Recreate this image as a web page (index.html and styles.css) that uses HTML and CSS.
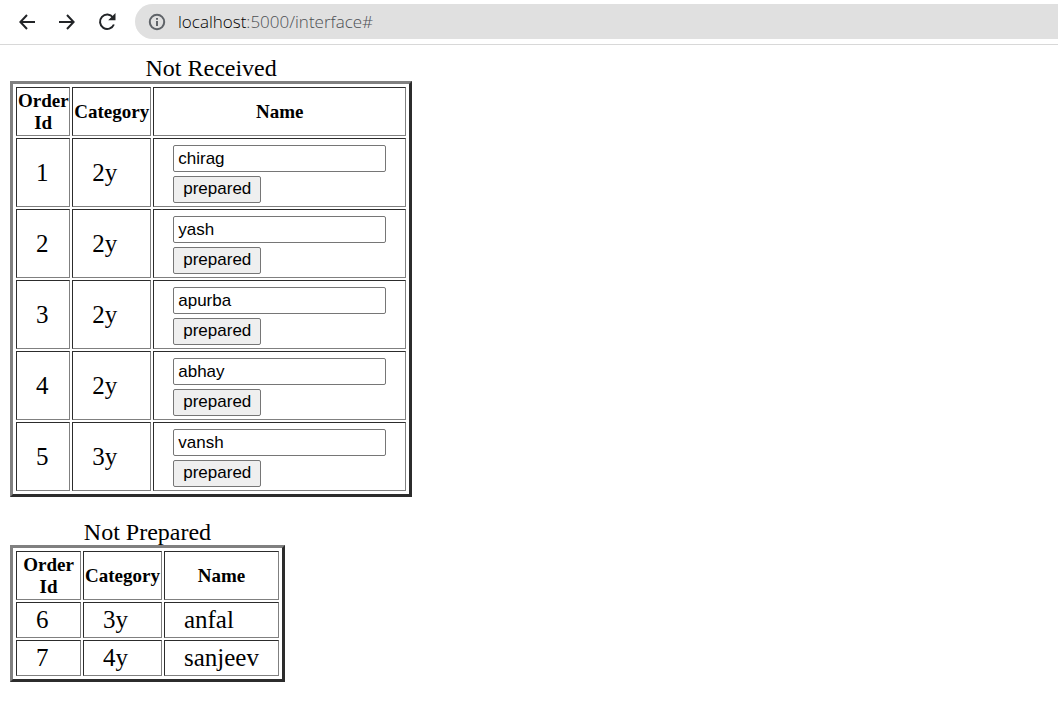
FILE: index.html
```html
<!DOCTYPE html>
<html lang="en">
<head>
<meta charset="utf-8">
<title>Orders</title>
<link rel="stylesheet" href="styles.css">
</head>
<body>
<header class="toolbar">
  <nav class="nav">
    <button class="nav-button" type="button" aria-label="Back"><svg width="16" height="16" viewBox="0 0 16 16"><path d="M16 8H2M8 1L1.400 8L8 15"/></svg></button>
    <button class="nav-button" type="button" aria-label="Forward"><svg width="16" height="16" viewBox="0 0 16 16"><path d="M0 8H14M8 1L14.600 8L8 15"/></svg></button>
    <button class="nav-button" type="button" aria-label="Reload"><svg width="18" height="18" viewBox="0 0 18 18"><path d="M15 4.500A7.200 7.200 0 1 0 15.900 11.500"/><path class="solid" d="M17.500 0V7.300H10.200Z"/></svg></button>
  </nav>
  <div class="address">
    <svg class="info" width="18" height="18" viewBox="0 0 18 18"><circle cx="9" cy="9" r="7.200"/><path d="M9 8V13M9 5V6.800"/></svg>
    <div class="url" role="textbox" aria-label="Address"><span class="host">localhost</span>:5000/interface#</div>
  </div>
</header>
<main class="page">
  <table class="orders">
    <caption>Not Received</caption>
    <thead><tr><th class="id">Order Id</th><th>Category</th><th>Name</th></tr></thead>
    <tbody>
      <tr><td>1</td><td>2y</td><td><form class="entry"><input type="text" aria-label="Name for order 1" value="chirag"><button type="button">prepared</button></form></td></tr>
      <tr><td>2</td><td>2y</td><td><form class="entry"><input type="text" aria-label="Name for order 2" value="yash"><button type="button">prepared</button></form></td></tr>
      <tr><td>3</td><td>2y</td><td><form class="entry"><input type="text" aria-label="Name for order 3" value="apurba"><button type="button">prepared</button></form></td></tr>
      <tr><td>4</td><td>2y</td><td><form class="entry"><input type="text" aria-label="Name for order 4" value="abhay"><button type="button">prepared</button></form></td></tr>
      <tr><td>5</td><td>3y</td><td><form class="entry"><input type="text" aria-label="Name for order 5" value="vansh"><button type="button">prepared</button></form></td></tr>
    </tbody>
  </table>
  <table class="orders">
    <caption>Not Prepared</caption>
    <thead><tr><th class="id wide">Order Id</th><th>Category</th><th>Name</th></tr></thead>
    <tbody>
      <tr><td>6</td><td>3y</td><td>anfal</td></tr>
      <tr><td>7</td><td>4y</td><td>sanjeev</td></tr>
    </tbody>
  </table>
</main>
</body>
</html>
```
FILE: styles.css
```css
* { box-sizing: border-box; }
body { margin: 0; background: #fff; color: #000; font-family: "Liberation Serif", serif; }

.toolbar { display: flex; align-items: center; gap: 16px; height: 45px; padding: 0 0 1px 15px; border-bottom: 1px solid #d8d8d8; }
.nav { display: flex; gap: 16px; }
.nav-button { display: flex; align-items: center; justify-content: center; width: 24px; height: 24px; padding: 0; border: 0; background: none; }
.nav-button svg { fill: none; stroke: #222427; stroke-width: 2; }
.nav-button .solid { fill: #222427; stroke: none; }
.address { flex: 1; display: flex; align-items: center; gap: 12px; height: 35px; padding-left: 13px; border-radius: 18px 0 0 18px; background: #e0e0e0; }
.info { fill: none; stroke: #5f6368; stroke-width: 2; }
.url { font: 300 17px/24px "Open Sans", sans-serif; color: #4c4f53; }
.host { color: #000; }

.page { display: flex; flex-direction: column; align-items: flex-start; gap: 22px; padding: 10px; }
.orders { border: 3px outset gray; border-spacing: 2px; padding: 1px; }
.orders caption { font-size: 24px; line-height: 26px; white-space: nowrap; }
.orders th, .orders td { border: 1px inset gray; }
.orders th { padding: 2px 1px 1px; font-size: 19px; line-height: 22px; }
.orders .id { width: 54px; }
.orders .wide { width: 65px; padding: 2px 6px 1px; }
.orders td { padding: 3px 19px; font-size: 25px; line-height: 28px; }

.entry { display: flex; flex-direction: column; align-items: flex-start; gap: 4px; padding-top: 3px; }
.entry input, .entry button { height: 27px; border: 1px solid #767676; border-radius: 2px; font: 17px/20px "Liberation Sans", sans-serif; color: #000; }
.entry input { width: 213px; padding: 1px 4px; background: #fff; }
.entry button { padding: 0 9px 1px; background: #efefef; }
```
